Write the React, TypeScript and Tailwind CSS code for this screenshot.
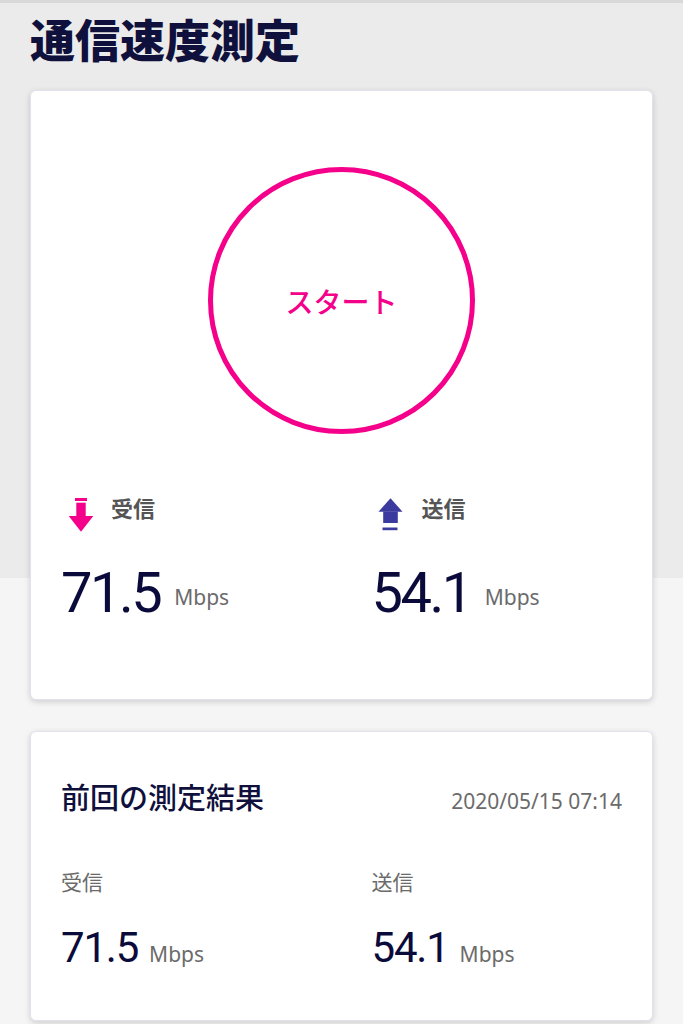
import React from "react";

const jp = { fontFamily: '"Noto Sans CJK JP", "Noto Sans", sans-serif' };
const num = { fontFamily: 'Roboto, "Noto Sans", sans-serif' };
const lat = { fontFamily: '"Noto Sans", "Noto Sans CJK JP", sans-serif' };

function DownIcon() {
  return (
    <svg width="40" height="36" viewBox="0 0 40 36" className="shrink-0">
      <rect x="14" y="2" width="12" height="3" fill="#f5008b" />
      <rect x="15.3" y="6.7" width="9.4" height="13.5" fill="#f5008b" />
      <polygon points="7.7,20 32.3,20 20,35.7" fill="#f5008b" />
    </svg>
  );
}

function UpIcon() {
  return (
    <svg width="40" height="36" viewBox="0 0 40 36" className="shrink-0">
      <polygon points="18.5,2.3 30.5,15.7 6.5,15.7" fill="#3b3b9f" />
      <rect x="11.2" y="15.5" width="14.6" height="11.5" fill="#3b3b9f" />
      <rect x="10.5" y="31.5" width="15" height="2.7" fill="#3b3b9f" />
    </svg>
  );
}

function BigStat({ icon, label, value }: { icon: React.ReactNode; label: string; value: string }) {
  return (
    <div className="pl-[30px]">
      <div className="flex items-center h-[36px]">
        {icon}
        <span className="ml-[10px] pb-[14px] text-[22px] font-bold text-[#555555] leading-[32px]" style={jp}>
          {label}
        </span>
      </div>
      <div className="mt-[33px] flex items-end">
        <span className="text-[56px] leading-none tracking-[-2.5px] text-[#0b0b3b]" style={num}>
          {value}
        </span>
        <span className="ml-[14px] mb-[13px] text-[21px] text-[#6b6b6b] leading-none" style={lat}>
          Mbps
        </span>
      </div>
    </div>
  );
}

function SmallStat({ label, value }: { label: string; value: string }) {
  return (
    <div className="pl-[30px]">
      <div className="text-[21px] text-[#6b6b6b] leading-[30px]" style={jp}>
        {label}
      </div>
      <div className="mt-[31px] flex items-baseline">
        <span className="text-[42px] leading-none tracking-[-1.2px] text-[#0b0b3b]" style={num}>
          {value}
        </span>
        <span className="ml-[11px] text-[21px] text-[#6b6b6b] leading-none" style={lat}>
          Mbps
        </span>
      </div>
    </div>
  );
}

export default function App() {
  return (
    <div
      className="min-h-[1024px] w-full border-t-[3px] border-[#d9d9d9] bg-[linear-gradient(to_bottom,#ebebeb_575px,#f5f5f5_575px)] px-[30px]"
      style={jp}
    >
      <h1 className="pt-[8px] text-[45px] font-black leading-[56px] text-[#10103d]" style={jp}>
        通信速度測定
      </h1>

      <section className="mt-[23px] rounded-[6px] border border-[#e2e2ee] bg-white shadow-[0_2px_6px_rgba(0,0,0,0.16)]">
        <div className="flex justify-center pt-[76px]">
          <button
            className="flex h-[267px] w-[267px] items-center justify-center rounded-full border-[5px] border-[#f5008b] bg-white"
            type="button"
          >
            <span className="text-[28px] font-medium text-[#f5008b]" style={jp}>
              スタート
            </span>
          </button>
        </div>
        <div className="mt-[62px] grid grid-cols-2 pb-[78px]">
          <BigStat icon={<DownIcon />} label="受信" value="71.5" />
          <BigStat icon={<UpIcon />} label="送信" value="54.1" />
        </div>
      </section>

      <section className="mt-[31px] rounded-[6px] border border-[#e2e2ee] bg-white pb-[51px] shadow-[0_2px_6px_rgba(0,0,0,0.16)]">
        <div className="flex items-baseline justify-between px-[30px] pt-[44px]">
          <h2 className="text-[29px] font-medium leading-[40px] text-[#10103d]" style={jp}>
            前回の測定結果
          </h2>
          <span className="text-[21px] text-[#6b6b6b]" style={lat}>
            2020/05/15 07:14
          </span>
        </div>
        <div className="mt-[48px] grid grid-cols-2">
          <SmallStat label="受信" value="71.5" />
          <SmallStat label="送信" value="54.1" />
        </div>
      </section>
    </div>
  );
}
